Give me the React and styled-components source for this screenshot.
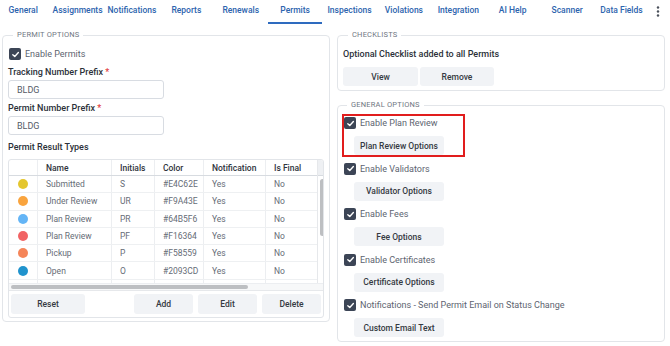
import styled, { createGlobalStyle } from "styled-components";

const GlobalStyle = createGlobalStyle`
    html, body {
        margin: 0;
        padding: 0;
        background: #ffffff;
        font-family: Roboto, "Liberation Sans", sans-serif;
    }
    * {
        box-sizing: border-box;
    }
`;

const Page = styled.div`
    width: 670px;
    height: 346px;
    overflow: hidden;
`;

const TabBar = styled.div`
    display: flex;
    align-items: flex-start;
    height: 24px;
    margin-left: -4px;
`;

const Tab = styled.div`
    width: 54.4px;
    height: 24px;
    flex-shrink: 0;
    display: flex;
    align-items: center;
    justify-content: center;
    padding-bottom: 2px;
    font-size: 8.5px;
    font-weight: 500;
    color: #2d64ae;
    white-space: nowrap;
    border-bottom: 2px solid ${(p) => (p.$active ? "#2e6bbf" : "transparent")};
`;

const More = styled.div`
    width: 18px;
    height: 22px;
    display: flex;
    align-items: center;
    justify-content: center;
`;

const Columns = styled.div`
    display: grid;
    grid-template-columns: 328px 328px;
    column-gap: 7px;
    padding: 6px 0 0 2px;
    align-items: start;
`;

const Panel = styled.fieldset`
    margin: 0;
    border: 1px solid #e2e5e9;
    border-radius: 4px;
    padding: ${(p) => p.$pad || "8px 5px 3px 5px"};
    min-width: 0;
    & + & {
        margin-top: 9px;
    }
`;

const Legend = styled.legend`
    margin-left: 5px;
    padding: 0 4px;
    font-size: 7.5px;
    line-height: 10px;
    color: #6f7682;
    letter-spacing: 0.2px;
    text-transform: uppercase;
`;

const RightStack = styled.div`
    display: flex;
    flex-direction: column;
`;

const CheckRow = styled.label`
    display: flex;
    align-items: center;
    gap: 4px;
    height: 12px;
    font-size: 9px;
    color: #5d6470;
    padding-left: ${(p) => p.$indent || 0}px;
`;

const Box = styled.span`
    width: 12px;
    height: 12px;
    border-radius: 2px;
    background: #3c4556;
    display: flex;
    align-items: center;
    justify-content: center;
    flex-shrink: 0;
`;

const FieldLabel = styled.div`
    font-size: 9px;
    font-weight: 500;
    color: #2c3139;
    line-height: 11px;
    margin-top: ${(p) => p.$top || 0}px;
`;

const Star = styled.span`
    color: #e23b3b;
`;

const Input = styled.div`
    width: 156px;
    height: 19px;
    margin-top: 2px;
    border: 1px solid #d8dce2;
    border-radius: 3px;
    padding-left: 8px;
    display: flex;
    align-items: center;
    font-size: 9px;
    color: #555b66;
`;

const TableFrame = styled.div`
    margin: 6px 0 0 0;
    border: 1px solid #e2e5e9;
    border-radius: 3px;
    overflow: hidden;
`;

const GridArea = styled.div`
    display: flex;
`;

const GridMain = styled.div`
    flex: 1;
    display: flex;
    flex-direction: column;
`;

const Row = styled.div`
    display: grid;
    grid-template-columns: 28px 74px 43px 49px 62px 52px;
    height: ${(p) => (p.$head ? "16px" : "17.3px")};
    border-bottom: 1px solid ${(p) => (p.$head ? "#d7dbe0" : "#eef0f2")};
    flex-shrink: 0;
`;

const Cell = styled.div`
    display: flex;
    align-items: center;
    padding-left: 8px;
    font-size: 8.5px;
    font-weight: ${(p) => (p.$head ? 500 : 400)};
    color: ${(p) => (p.$head ? "#2f343c" : "#666c76")};
    border-left: ${(p) => (p.$first ? "none" : "1px solid #eceef1")};
    white-space: nowrap;
    overflow: hidden;
`;

const Dot = styled.span`
    width: 10px;
    height: 10px;
    border-radius: 50%;
    background: ${(p) => p.$color};
    margin-left: 1px;
`;

const Body = styled.div`
    height: 107px;
    overflow: hidden;
    display: flex;
    flex-direction: column;
`;

const VTrack = styled.div`
    width: 10px;
    border-left: 1px solid #e6e8eb;
    display: flex;
    flex-direction: column;
`;

const VHead = styled.div`
    height: 16px;
    background: #eef0f3;
    border-bottom: 1px solid #d7dbe0;
`;

const VThumb = styled.div`
    width: 5px;
    height: 57px;
    margin: 3px 0 0 2px;
    border-radius: 3px;
    background: #bdbfc2;
`;

const HTrack = styled.div`
    height: 8px;
    background: #f7f8f9;
    border-top: 1px solid #eceef1;
    border-bottom: 1px solid #e6e8eb;
    padding: 1px 0 0 2px;
`;

const HThumb = styled.div`
    width: 237px;
    height: 4px;
    border-radius: 3px;
    background: #bdbfc2;
`;

const ButtonRow = styled.div`
    display: flex;
    gap: 5px;
    padding: 3px 2px 3px 2px;
`;

const Spacer = styled.div`
    flex: 1;
`;

const Button = styled.div`
    width: ${(p) => p.$w}px;
    height: ${(p) => p.$h || 20}px;
    border-radius: 3px;
    background: #f1f3f6;
    display: flex;
    align-items: center;
    justify-content: center;
    font-size: 8.5px;
    font-weight: 500;
    color: #353a42;
    flex-shrink: 0;
    margin-left: ${(p) => p.$ml || 0}px;
`;

const Note = styled.div`
    font-size: 9px;
    font-weight: 500;
    color: #2c3139;
    line-height: 11px;
`;

const ChecklistButtons = styled.div`
    display: flex;
    gap: 2px;
    margin-top: 7px;
`;

const Options = styled.div`
    display: flex;
    flex-direction: column;
    gap: 2.5px;
`;

const Option = styled.div`
    width: 123px;
    border: 2px solid ${(p) => (p.$highlight ? "#e11d1d" : "transparent")};
    padding-top: 1px;
    display: flex;
    flex-direction: column;
    gap: 7px;
    white-space: nowrap;
`;

const Check = () => (
    <Box>
        <svg width="9" height="9" viewBox="0 0 10 10">
            <path d="M2 5.2 L4.2 7.3 L8.2 2.8" fill="none" stroke="#fff" strokeWidth="1.5" strokeLinecap="round" strokeLinejoin="round" />
        </svg>
    </Box>
);

const tabs = ["General", "Assignments", "Notifications", "Reports", "Renewals", "Permits", "Inspections", "Violations", "Integration", "AI Help", "Scanner", "Data Fields"];

const results = [
    { name: "Submitted", init: "S", color: "#E4C62E" },
    { name: "Under Review", init: "UR", color: "#F9A43E" },
    { name: "Plan Review", init: "PR", color: "#64B5F6" },
    { name: "Plan Review", init: "PF", color: "#F16364" },
    { name: "Pickup", init: "P", color: "#F58559" },
    { name: "Open", init: "O", color: "#2093CD" },
    { name: "", init: "", color: "transparent" },
];

const options = [
    { label: "Enable Plan Review", button: "Plan Review Options", highlight: true },
    { label: "Enable Validators", button: "Validator Options" },
    { label: "Enable Fees", button: "Fee Options" },
    { label: "Enable Certificates", button: "Certificate Options" },
    { label: "Notifications - Send Permit Email on Status Change", button: "Custom Email Text" },
];

function App() {
    return (
        <Page>
            <GlobalStyle />
            <TabBar>
                {tabs.map((t) => (
                    <Tab key={t} $active={t === "Permits"}>
                        {t}
                    </Tab>
                ))}
                <More>
                    <svg width="4" height="11" viewBox="0 0 4 11">
                        <circle cx="2" cy="1.5" r="1.2" fill="#4a505a" />
                        <circle cx="2" cy="5.5" r="1.2" fill="#4a505a" />
                        <circle cx="2" cy="9.5" r="1.2" fill="#4a505a" />
                    </svg>
                </More>
            </TabBar>
            <Columns>
                <Panel>
                    <Legend>Permit Options</Legend>
                    <CheckRow $indent={1}>
                        <Check />
                        Enable Permits
                    </CheckRow>
                    <FieldLabel $top={7}>
                        Tracking Number Prefix <Star>*</Star>
                    </FieldLabel>
                    <Input>BLDG</Input>
                    <FieldLabel $top={4}>
                        Permit Number Prefix <Star>*</Star>
                    </FieldLabel>
                    <Input>BLDG</Input>
                    <FieldLabel $top={7}>Permit Result Types</FieldLabel>
                    <TableFrame>
                        <GridArea>
                            <GridMain>
                                <Row $head>
                                    <Cell $head $first />
                                    <Cell $head>Name</Cell>
                                    <Cell $head>Initials</Cell>
                                    <Cell $head>Color</Cell>
                                    <Cell $head>Notification</Cell>
                                    <Cell $head>Is Final</Cell>
                                </Row>
                                <Body>
                                    {results.map((r, i) => (
                                        <Row key={i}>
                                            <Cell $first>
                                                <Dot $color={r.color} />
                                            </Cell>
                                            <Cell>{r.name}</Cell>
                                            <Cell>{r.init}</Cell>
                                            <Cell>{r.name ? r.color : ""}</Cell>
                                            <Cell>{r.name ? "Yes" : ""}</Cell>
                                            <Cell>{r.name ? "No" : ""}</Cell>
                                        </Row>
                                    ))}
                                </Body>
                            </GridMain>
                            <VTrack>
                                <VHead />
                                <VThumb />
                            </VTrack>
                        </GridArea>
                        <HTrack>
                            <HThumb />
                        </HTrack>
                        <ButtonRow>
                            <Button $w={74}>Reset</Button>
                            <Spacer />
                            <Button $w={59}>Add</Button>
                            <Button $w={59}>Edit</Button>
                            <Button $w={59}>Delete</Button>
                        </ButtonRow>
                    </TableFrame>
                </Panel>
                <RightStack>
                    <Panel $pad="9px 5px 4px 5px">
                        <Legend>Checklists</Legend>
                        <Note>Optional Checklist added to all Permits</Note>
                        <ChecklistButtons>
                            <Button $w={75} $h={19}>View</Button>
                            <Button $w={74} $h={19}>Remove</Button>
                        </ChecklistButtons>
                    </Panel>
                    <Panel $pad="4px 4px 2px 4px">
                        <Legend>General Options</Legend>
                        <Options>
                            {options.map((o) => (
                                <Option key={o.label} $highlight={o.highlight}>
                                    <CheckRow>
                                        <Check />
                                        {o.label}
                                    </CheckRow>
                                    <Button $w={90} $h={19} $ml={10}>
                                        {o.button}
                                    </Button>
                                </Option>
                            ))}
                        </Options>
                    </Panel>
                </RightStack>
            </Columns>
        </Page>
    );
}

export default App;
